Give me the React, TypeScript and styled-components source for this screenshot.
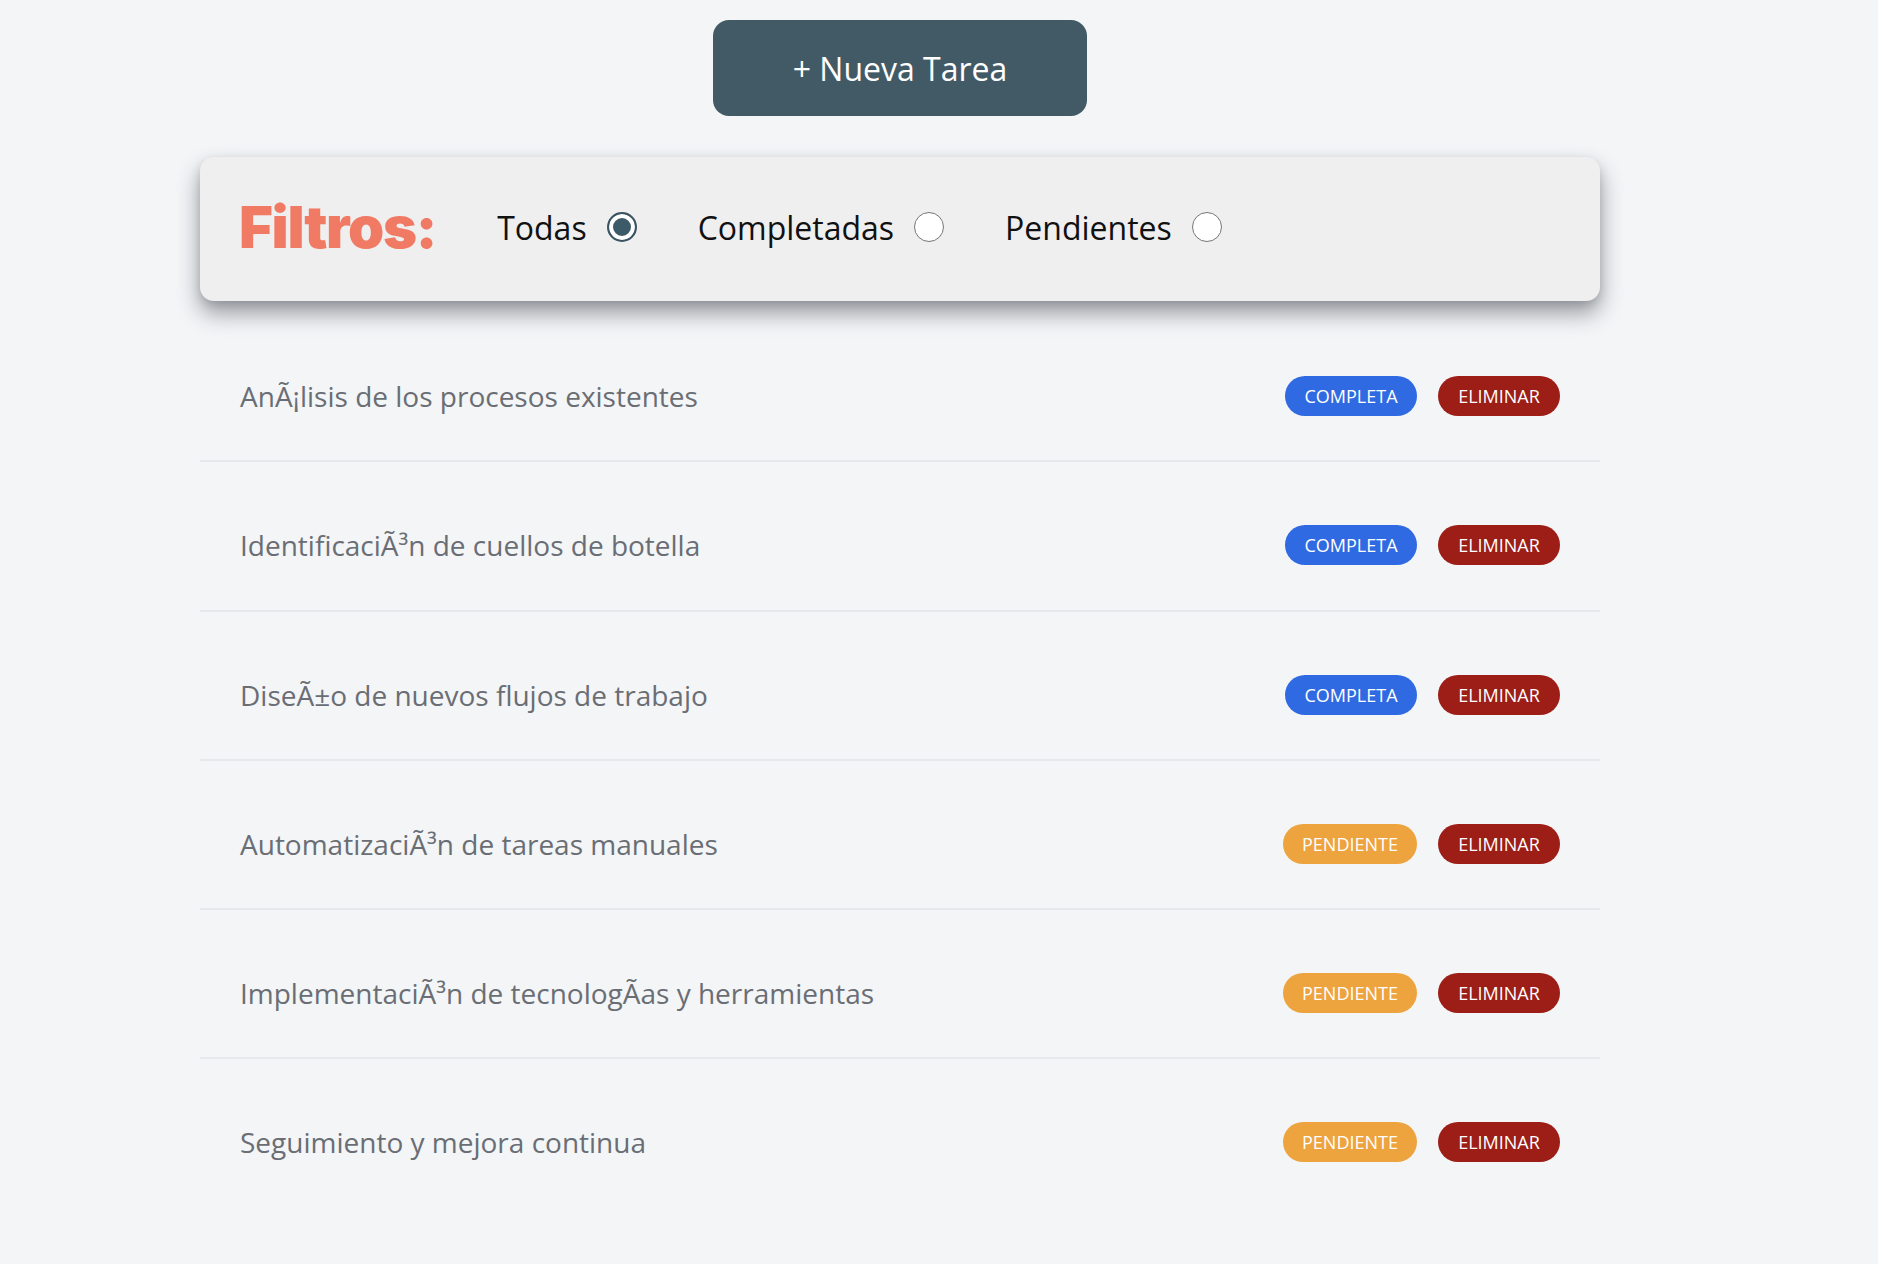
import React, { useState } from "react";
import styled, { createGlobalStyle } from "styled-components";

const GlobalStyle = createGlobalStyle`
  html, body {
    margin: 0;
    padding: 0;
    background: #f3f5f7;
    font-family: "Open Sans", "Noto Sans", sans-serif;
  }
`;

const Page = styled.div`
  width: 1400px;
  margin-left: 200px;
  padding-top: 20px;
  display: flex;
  flex-direction: column;
  align-items: center;
`;

const NewButton = styled.button`
  width: 374px;
  height: 96px;
  border: none;
  border-radius: 16px;
  background: #425a66;
  color: #ffffff;
  font-family: "Open Sans", sans-serif;
  font-size: 32px;
  font-weight: 500;
  cursor: pointer;
`;

const FilterCard = styled.div`
  align-self: stretch;
  margin-top: 41px;
  height: 144px;
  box-sizing: border-box;
  padding: 0 39px 4px;
  background: #efefef;
  border-radius: 14px;
  box-shadow: 0 12px 22px rgba(35, 40, 50, 0.45), 0 3px 8px rgba(0, 0, 0, 0.1);
  display: flex;
  align-items: center;
  gap: 61px;
`;

const FilterTitle = styled.h2`
  margin: 0;
  font-family: "Inter", sans-serif;
  font-weight: 900;
  font-size: 58px;
  letter-spacing: -1.3px;
  color: #f07a63;
  line-height: 1;
`;

const FilterOption = styled.label`
  display: flex;
  align-items: center;
  gap: 20px;
  font-size: 32px;
  color: #111111;
  cursor: pointer;
`;

const Radio = styled.input.attrs({ type: "radio" })`
  appearance: none;
  margin: 0;
  width: 30px;
  height: 30px;
  border-radius: 50%;
  box-sizing: border-box;
  border: 1.5px solid #767676;
  background: #ffffff;
  cursor: pointer;

  &:checked {
    border: 2px solid #3b5461;
    background: #3d5a68;
    box-shadow: inset 0 0 0 4px #ffffff;
  }
`;

const List = styled.ul`
  align-self: stretch;
  list-style: none;
  margin: 12px 0 0;
  padding: 0;
`;

const Row = styled.li`
  margin-top: 20px;
  padding: 43px 40px 44.25px;
  border-bottom: 2px solid #e6e8eb;
  display: flex;
  align-items: center;
  justify-content: space-between;

  &:last-child {
    border-bottom: none;
  }
`;

const TaskText = styled.span`
  font-size: 28px;
  color: #6a6e74;
`;

const Actions = styled.div`
  display: flex;
  align-items: center;
  gap: 21px;
`;

const Badge = styled.button<{ $tone: "done" | "pending" | "delete" }>`
  height: 40px;
  padding: 0 19px;
  min-width: ${(p) => (p.$tone === "delete" ? "122px" : p.$tone === "pending" ? "134px" : "132px")};
  border: none;
  border-radius: 20px;
  font-family: "Open Sans", sans-serif;
  font-size: 18px;
  font-weight: 500;
  color: #ffffff;
  text-transform: uppercase;
  cursor: pointer;
  background: ${(p) =>
    p.$tone === "done" ? "#2f6ae2" : p.$tone === "pending" ? "#eea43e" : "#9c1e16"};
`;

const tasks = [
  { text: "AnÃ¡lisis de los procesos existentes", done: true },
  { text: "IdentificaciÃ³n de cuellos de botella", done: true },
  { text: "DiseÃ±o de nuevos flujos de trabajo", done: true },
  { text: "AutomatizaciÃ³n de tareas manuales", done: false },
  { text: "ImplementaciÃ³n de tecnologÃas y herramientas", done: false },
  { text: "Seguimiento y mejora continua", done: false },
];

export default function App() {
  const [filter, setFilter] = useState("todas");
  return (
    <>
      <GlobalStyle />
      <Page>
        <NewButton>+ Nueva Tarea</NewButton>
        <FilterCard>
          <FilterTitle>Filtros:</FilterTitle>
          <FilterOption>
            Todas
            <Radio name="f" checked={filter === "todas"} onChange={() => setFilter("todas")} />
          </FilterOption>
          <FilterOption>
            Completadas
            <Radio name="f" checked={filter === "comp"} onChange={() => setFilter("comp")} />
          </FilterOption>
          <FilterOption>
            Pendientes
            <Radio name="f" checked={filter === "pend"} onChange={() => setFilter("pend")} />
          </FilterOption>
        </FilterCard>
        <List>
          {tasks.map((t) => (
            <Row key={t.text}>
              <TaskText>{t.text}</TaskText>
              <Actions>
                <Badge $tone={t.done ? "done" : "pending"}>{t.done ? "Completa" : "Pendiente"}</Badge>
                <Badge $tone="delete">Eliminar</Badge>
              </Actions>
            </Row>
          ))}
        </List>
      </Page>
    </>
  );
}
